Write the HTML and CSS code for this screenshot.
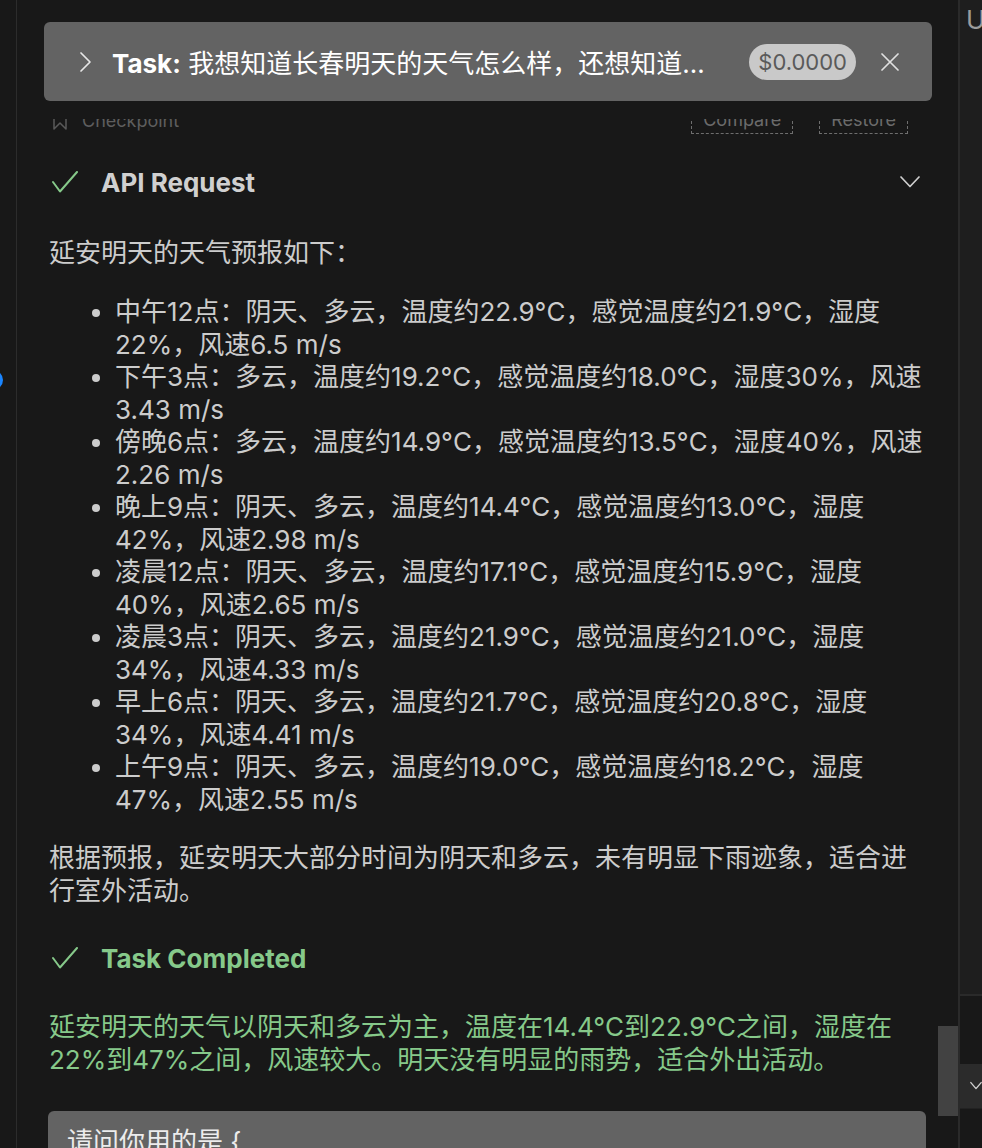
FILE: index.html
```html
<!DOCTYPE html>
<html lang="zh">
<head>
<meta charset="utf-8">
<title>Task</title>
<link rel="stylesheet" href="styles.css">
</head>
<body>
<div class="app">
  <div class="gutter"><span class="dot"></span></div>
  <main class="main">
    <div class="task-bar">
      <div class="task-card">
        <svg class="chev-right" width="14" height="22" viewBox="0 0 14 22"><polyline points="3,2 12,11 3,20" fill="none" stroke="#e6e6e6" stroke-width="1.7" stroke-linecap="round" stroke-linejoin="round"/></svg>
        <div class="title"><b>Task:</b> 我想知道长春明天的天气怎么样，还想知道延安明天的天气怎么样</div>
        <span class="pill">$0.0000</span>
        <svg class="close" width="18" height="18" viewBox="0 0 18 18"><path d="M1 1 L17 17 M17 1 L1 17" stroke="#e0e0e0" stroke-width="1.7" stroke-linecap="round"/></svg>
      </div>
    </div>

    <div class="content">
      <div class="checkpoint">
        <svg class="bookmark" width="16" height="20" viewBox="0 0 16 20"><path d="M2 1 H14 V19 L8 13 L2 19 Z" fill="none" stroke="#5a5a5a" stroke-width="1.5" stroke-linejoin="round"/></svg>
        <span class="cp-label">Checkpoint</span>
        <span class="cp-btn">Compare</span>
        <span class="cp-btn">Restore</span>
      </div>

      <div class="row api">
        <svg class="check" width="26" height="22" viewBox="0 0 26 22"><polyline points="1,11 8,20.5 25,1" fill="none" stroke="#86c98a" stroke-width="2" stroke-linecap="round" stroke-linejoin="round"/></svg>
        <span class="row-label">API Request</span>
        <svg class="chev-down" width="20" height="12" viewBox="0 0 20 12"><polyline points="1,1 10,10.5 19,1" fill="none" stroke="#cfcfcf" stroke-width="1.7" stroke-linecap="round" stroke-linejoin="round"/></svg>
      </div>

      <p class="para first">延安明天的天气预报如下：</p>
      <ul class="list">
        <li>中午12点：阴天、多云，温度约22.9°C，感觉温度约21.9°C，湿度22%，风速6.5 m/s</li>
        <li>下午3点：多云，温度约19.2°C，感觉温度约18.0°C，湿度30%，风速3.43 m/s</li>
        <li>傍晚6点：多云，温度约14.9°C，感觉温度约13.5°C，湿度40%，风速2.26 m/s</li>
        <li>晚上9点：阴天、多云，温度约14.4°C，感觉温度约13.0°C，湿度42%，风速2.98 m/s</li>
        <li>凌晨12点：阴天、多云，温度约17.1°C，感觉温度约15.9°C，湿度40%，风速2.65 m/s</li>
        <li>凌晨3点：阴天、多云，温度约21.9°C，感觉温度约21.0°C，湿度34%，风速4.33 m/s</li>
        <li>早上6点：阴天、多云，温度约21.7°C，感觉温度约20.8°C，湿度34%，风速4.41 m/s</li>
        <li>上午9点：阴天、多云，温度约19.0°C，感觉温度约18.2°C，湿度47%，风速2.55 m/s</li>
      </ul>
      <p class="para after-list">根据预报，延安明天大部分时间为阴天和多云，未有明显下雨迹象，适合进行室外活动。</p>

      <div class="row done">
        <svg class="check" width="26" height="22" viewBox="0 0 26 22"><polyline points="1,11 8,20.5 25,1" fill="none" stroke="#86c98a" stroke-width="2" stroke-linecap="round" stroke-linejoin="round"/></svg>
        <span class="row-label">Task Completed</span>
      </div>

      <p class="para green">延安明天的天气以阴天和多云为主，温度在14.4°C到22.9°C之间，湿度在22%到47%之间，风速较大。明天没有明显的雨势，适合外出活动。</p>

      <div class="input-box">请问你用的是 {</div>
    </div>

    <div class="thumb"></div>
  </main>
  <aside class="side">
    <div class="side-top">U</div>
    <div class="side-mid"></div>
    <div class="side-btn">
      <svg width="14" height="10" viewBox="0 0 14 10"><polyline points="1,1 7,8 13,1" fill="none" stroke="#d0d0d0" stroke-width="1.6" stroke-linecap="round" stroke-linejoin="round"/></svg>
    </div>
    <div class="side-rest"></div>
  </aside>
</div>
</body>
</html>
```

FILE: styles.css
```css
html, body {
  margin: 0;
  padding: 0;
  height: 1148px;
  overflow: hidden;
  background: #181818;
}

.app {
  display: flex;
  height: 1148px;
  font-family: Inter, "Noto Sans CJK SC", sans-serif;
  color: #cccccc;
}

.gutter {
  width: 16px;
  flex: none;
  position: relative;
}

.dot {
  position: absolute;
  left: -17px;
  top: 370px;
  width: 20px;
  height: 20px;
  border-radius: 50%;
  background: #1a85ff;
}

.main {
  flex: 1;
  min-width: 0;
  border-left: 1px solid #2c2c2c;
  position: relative;
  overflow: hidden;
}

.task-bar {
  position: absolute;
  top: 0;
  left: 0;
  right: 0;
  height: 119px;
  box-sizing: border-box;
  padding: 22px 26px 0 27px;
  background: #181818;
  z-index: 2;
}

.task-card {
  height: 79px;
  background: #636363;
  border-radius: 6px;
  display: flex;
  align-items: center;
  padding: 0 33px 0 34px;
}

.chev-right {
  flex: none;
  margin-right: 20px;
}

.title {
  flex: 1;
  min-width: 0;
  white-space: nowrap;
  overflow: hidden;
  text-overflow: ellipsis;
  font-size: 26px;
  color: #ffffff;
}

.title b {
  font-weight: 700;
}

.pill {
  flex: none;
  margin-left: 28px;
  height: 36px;
  line-height: 36px;
  padding: 0 9px;
  border-radius: 18px;
  background: #c9c9c9;
  color: #5a5a5a;
  font-size: 22px;
}

.close {
  flex: none;
  margin-left: 25px;
}

.content {
  padding: 106px 32px 0 32px;
}

.checkpoint {
  height: 28px;
  display: flex;
  align-items: center;
  padding: 0 18px 0 3px;
  font-size: 18px;
  color: #5e5e5e;
}

.bookmark {
  flex: none;
  margin-right: 14px;
}

.cp-label {
  flex: 1;
}

.cp-btn {
  height: 26px;
  line-height: 26px;
  padding: 0 11px;
  border: 1px dashed #6e6e6e;
  color: #6b6b6b;
}

.cp-btn + .cp-btn {
  margin-left: 26px;
}

.row {
  height: 40px;
  display: flex;
  align-items: center;
  padding: 0 6px 0 3px;
  font-size: 26px;
  font-weight: 700;
}

.row.api {
  margin-top: 28px;
  color: #d0d0d0;
}

.row.done {
  margin-top: 31px;
  color: #86c98a;
}

.check {
  flex: none;
  margin-right: 23px;
}

.row-label {
  flex: 1;
}

.chev-down {
  flex: none;
}

.para {
  margin: 0;
  font-size: 26px;
  line-height: 32.5px;
}

.para.first {
  margin-top: 35px;
}

.para.after-list {
  margin-top: 26px;
}

.para.green {
  margin-top: 33px;
  color: #86c98a;
}

.list {
  margin: 26.5px 0 0;
  padding-left: 66px;
  font-size: 26px;
  line-height: 32.5px;
}

.input-box {
  margin: 35px 0 0 -1px;
  height: 80px;
  box-sizing: border-box;
  padding: 15px 19px 0;
  background: #636363;
  border-radius: 6px 6px 0 0;
  font-size: 26px;
  line-height: 32.5px;
  color: #ececec;
}

.thumb {
  position: absolute;
  right: 0;
  top: 1026px;
  width: 20px;
  height: 90px;
  background: #424242;
}

.side {
  width: 22px;
  flex: none;
  border-left: 2px solid #2a2a2a;
  display: flex;
  flex-direction: column;
  overflow: hidden;
}

.side-top {
  height: 996px;
  background: #1e1e1e;
  padding: 4px 0 0 6px;
  box-sizing: border-box;
  font-size: 26px;
  line-height: 32px;
  color: #9c9c9c;
  border-bottom: 2px solid #2a2a2a;
}

.side-mid {
  height: 68px;
  background: #181818;
}

.side-btn {
  height: 44px;
  background: #2b2b2b;
  display: flex;
  align-items: center;
  padding-left: 10px;
}

.side-rest {
  flex: 1;
  background: #181818;
  border-top: 1px solid #222222;
}
```
